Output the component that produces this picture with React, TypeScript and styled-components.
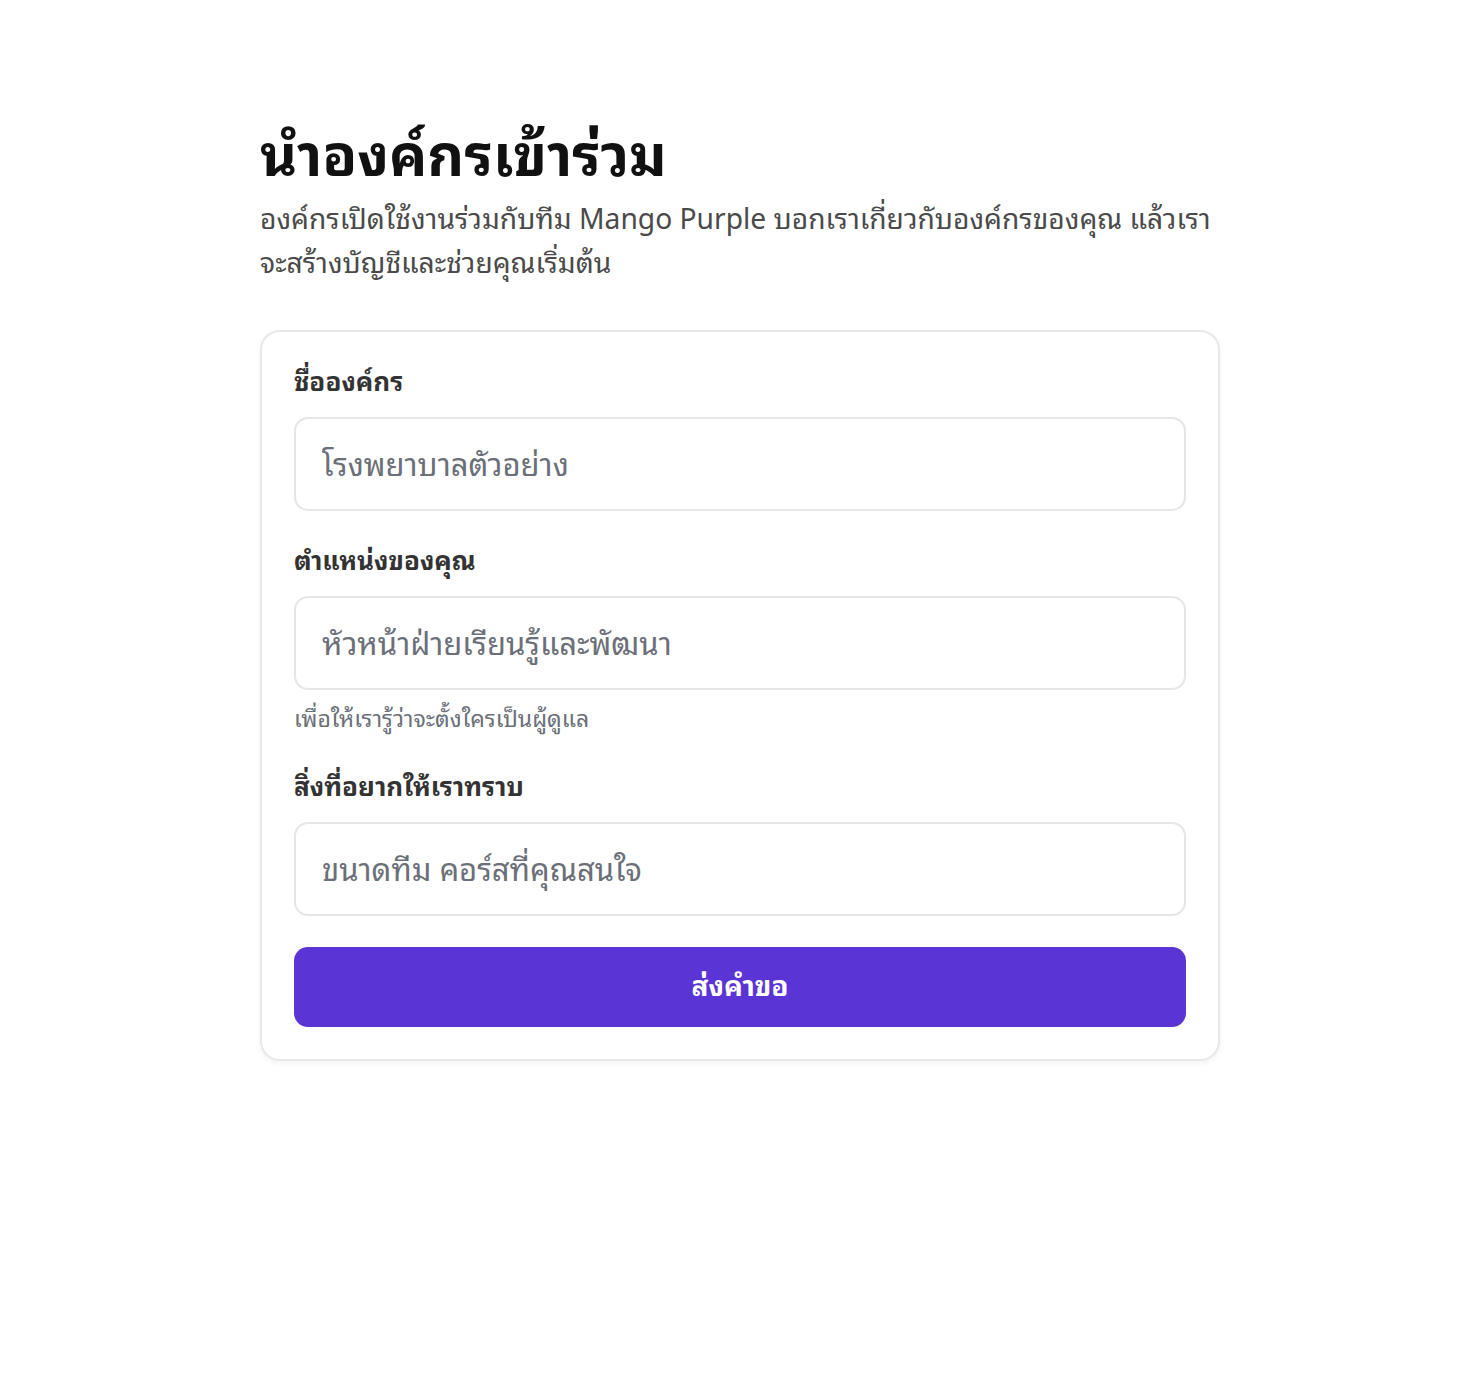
import styled, { createGlobalStyle } from "styled-components";

const GlobalStyle = createGlobalStyle`
  html, body {
    margin: 0;
    padding: 0;
    background: #ffffff;
  }
  body {
    font-family: "Noto Sans", "Noto Sans Thai Looped", sans-serif;
    color: #111111;
  }
  * {
    box-sizing: border-box;
  }
`;

const Page = styled.main`
  width: 960px;
  margin: 0 auto;
  padding-top: 118px;
  padding-bottom: 120px;
`;

const Title = styled.h1`
  margin: 0;
  font-size: 57px;
  font-weight: 700;
  line-height: 72px;
  color: #111111;
`;

const Intro = styled.p`
  margin: 6px 0 46px;
  font-size: 28.2px;
  line-height: 44px;
  color: #4a4a4a;
`;

const Card = styled.form`
  display: flex;
  flex-direction: column;
  border: 2px solid #e8e8e8;
  border-radius: 20px;
  padding: 32px;
  background: #ffffff;
  box-shadow: 0 2px 6px rgba(0, 0, 0, 0.05);
`;

const Field = styled.div<{ $gap?: number }>`
  display: flex;
  flex-direction: column;
  margin-bottom: ${(p) => p.$gap ?? 32}px;
`;

const Label = styled.label`
  font-size: 26px;
  font-weight: 700;
  line-height: 34px;
  color: #333333;
  margin-bottom: 19px;
`;

const Input = styled.input`
  height: 94px;
  width: 100%;
  border: 2px solid #e6e6e6;
  border-radius: 14px;
  padding: 0 26px;
  font-family: inherit;
  font-size: 31px;
  color: #222222;
  background: #ffffff;
  outline: none;

  &::placeholder {
    color: #6b6f78;
  }
`;

const Hint = styled.small`
  margin-top: 12px;
  font-size: 23px;
  line-height: 32px;
  color: #6b6f78;
`;

const Submit = styled.button`
  height: 80px;
  width: 100%;
  border: none;
  border-radius: 14px;
  padding: 0 0 8px;
  background: #5b34d6;
  color: #ffffff;
  font-family: inherit;
  font-size: 28px;
  font-weight: 700;
  cursor: pointer;
`;

export default function App() {
  return (
    <>
      <GlobalStyle />
      <Page>
        <Title>นำองค์กรเข้าร่วม</Title>
        <Intro>
          องค์กรเปิดใช้งานร่วมกับทีม Mango Purple บอกเราเกี่ยวกับองค์กรของคุณ แล้วเราจะสร้างบัญชีและช่วยคุณเริ่มต้น
        </Intro>
        <Card onSubmit={(e) => e.preventDefault()}>
          <Field>
            <Label htmlFor="org">ชื่อองค์กร</Label>
            <Input id="org" placeholder="โรงพยาบาลตัวอย่าง" />
          </Field>
          <Field $gap={35}>
            <Label htmlFor="role">ตำแหน่งของคุณ</Label>
            <Input id="role" placeholder="หัวหน้าฝ่ายเรียนรู้และพัฒนา" />
            <Hint>เพื่อให้เรารู้ว่าจะตั้งใครเป็นผู้ดูแล</Hint>
          </Field>
          <Field $gap={31}>
            <Label htmlFor="note">สิ่งที่อยากให้เราทราบ</Label>
            <Input id="note" placeholder="ขนาดทีม คอร์สที่คุณสนใจ" />
          </Field>
          <Submit type="submit">ส่งคำขอ</Submit>
        </Card>
      </Page>
    </>
  );
}
